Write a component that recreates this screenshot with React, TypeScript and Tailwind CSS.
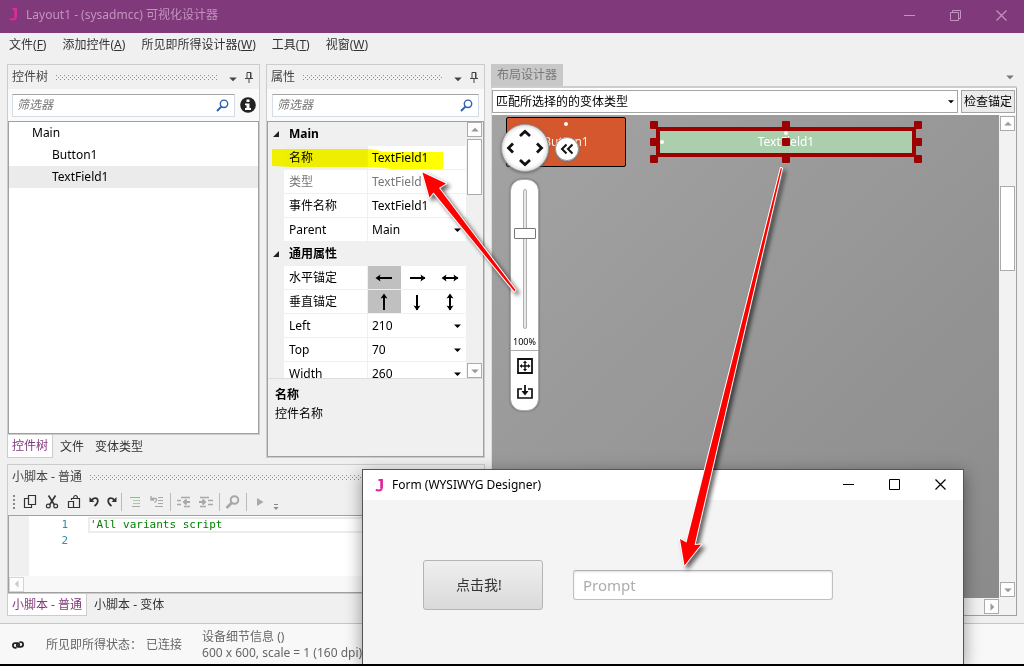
import type { ReactNode } from "react";

type Dir = "up" | "down" | "left" | "right";

const triangles: Record<Dir, string> = {
  up: "0,6 5,1 10,6",
  down: "0,2 10,2 5,7",
  left: "6,0 1,5 6,10",
  right: "2,0 7,5 2,10",
};

function Triangle({ dir, className }: { dir: Dir; className: string }) {
  return (
    <svg viewBox={dir === "up" || dir === "down" ? "0 0 10 8" : "0 0 8 10"} className={className} aria-hidden="true">
      <polygon points={triangles[dir]} fill="currentColor" />
    </svg>
  );
}

function Grip({ id }: { id: string }) {
  return (
    <svg className="h-[5px] min-w-0 flex-1" aria-hidden="true">
      <defs>
        <pattern id={id} width="4" height="4" patternUnits="userSpaceOnUse">
          <rect width="1" height="1" fill="#8c8c8c" />
          <rect x="2" y="2" width="1" height="1" fill="#8c8c8c" />
        </pattern>
      </defs>
      <rect width="100%" height="5" fill={`url(#${id})`} />
    </svg>
  );
}

function JLogo() {
  return (
    <svg viewBox="0 0 10 13" className="h-[13px] w-[10px]" aria-hidden="true">
      <path d="M4.500 1h3.300v7.400c0 2-1 3-3 3-1.200 0-2.200-.2-3-.7" fill="none" stroke="#dc2c9c" strokeWidth="2" />
      <path d="M6.300 0h2.500v9H6.300z" fill="#dc2c9c" />
    </svg>
  );
}

function PanelHeader({ title, id }: { title: string; id: string }) {
  return (
    <div className="flex h-6 shrink-0 items-center pl-1 pr-[2px] text-[#444]">
      <h2 className="mr-2">{title}</h2>
      <Grip id={id} />
      <button aria-label="菜单" className="ml-2 flex h-4 w-4 items-center justify-center pt-1">
        <Triangle dir="down" className="h-[6px] w-2" />
      </button>
      <button aria-label="固定" className="flex h-4 w-4 items-center justify-center">
        <svg viewBox="0 0 8 11" className="h-[11px] w-2" fill="none" stroke="currentColor" aria-hidden="true">
          <path d="M2 6V.5h4V6M5.500.5V6M0 6.500h8M4 6.500V11" />
        </svg>
      </button>
    </div>
  );
}

function Filter({ label }: { label: string }) {
  return (
    <div className="flex h-[23px] min-w-0 flex-1 items-center border border-[#d5dce6] border-t-[#a5a5a5] bg-white pr-[5px]">
      <input
        aria-label={label}
        placeholder="筛选器"
        className="min-w-0 flex-1 bg-transparent pl-1 italic outline-none placeholder:text-[#777]"
      />
      <svg viewBox="0 0 13 13" className="h-[13px] w-[13px]" fill="none" stroke="#2f5fae" aria-hidden="true">
        <circle cx="8" cy="4.800" r="3.700" strokeWidth="1.400" />
        <path d="M5.400 7.600 1 12" strokeWidth="2" />
      </svg>
    </div>
  );
}

function Anchor({ kind, active }: { kind: string; active?: boolean }) {
  const vertical = kind.startsWith("v");
  const start = kind !== "h-end" && kind !== "v-end";
  const end = kind !== "h-start" && kind !== "v-start";
  return (
    <button aria-label={kind} className={`flex h-[23px] w-[33px] items-center justify-center ${active ? "bg-[#c0c0c0]" : ""}`}>
      <svg viewBox="0 0 18 18" className={`h-[18px] w-[18px] ${vertical ? "rotate-90" : ""}`} aria-hidden="true">
        <path d="M2 9h15" stroke="#000" strokeWidth="2" />
        {start && <path d="M.5 9 5.500 5.500 4.500 9l1 3.500z" />}
        {end && <path d="m17.500 9-5-3.500 1 3.500-1 3.500z" />}
      </svg>
    </button>
  );
}

function GroupRow({ title }: { title: string }) {
  return (
    <tr className="h-6">
      <th colSpan={3} className="p-0 text-left font-bold text-black">
        <span className="flex items-center">
          <svg viewBox="0 0 8 8" className="ml-1 mr-[9px] h-2 w-2" aria-hidden="true">
            <path d="M7 1v6H1z" fill="#222" />
          </svg>
          {title}
        </span>
      </th>
    </tr>
  );
}

function PropRow({ name, muted, selected, children }: { name: string; muted?: boolean; selected?: boolean; children: ReactNode }) {
  return (
    <tr className={`h-6 ${muted ? "text-[#777]" : "text-black"}`}>
      <td className="p-0" />
      <th
        scope="row"
        className={`border-b border-r border-[#f0f0f0] p-0 pl-[5px] text-left font-normal ${selected ? "bg-[#eee]" : "bg-white"}`}
      >
        {name}
      </th>
      <td className="border-b border-[#f0f0f0] bg-white p-0">{children}</td>
    </tr>
  );
}

function TextValue({ label, value }: { label: string; value: string }) {
  return <input aria-label={label} defaultValue={value} className="block w-full bg-transparent pl-1 outline-none" />;
}

function SelectValue({ label, value }: { label: string; value: string }) {
  return (
    <div className="flex items-center pr-[5px]">
      <select aria-label={label} className="min-w-0 flex-1 appearance-none bg-transparent pl-1 outline-none">
        <option>{value}</option>
      </select>
      <Triangle dir="down" className="h-[6px] w-[7px]" />
    </div>
  );
}

function ScrollButton({ dir }: { dir: Dir }) {
  const size = dir === "up" || dir === "down" ? "h-[6px] w-2" : "h-2 w-[6px]";
  return (
    <button aria-label={dir} className="flex h-[15px] w-[15px] shrink-0 items-center justify-center border border-[#ababab] bg-[#fdfdfd] text-[#999]">
      <Triangle dir={dir} className={size} />
    </button>
  );
}

function Tab({ active, children }: { active?: boolean; children: ReactNode }) {
  return (
    <button className={`px-1 ${active ? "border border-t-0 border-[#ccc] bg-white text-[#80397b]" : "text-[#333]"}`}>
      {children}
    </button>
  );
}

function TreePanel() {
  return (
    <div className="flex w-[253px] shrink-0 flex-col">
      <section className="flex min-h-0 flex-1 flex-col border border-[#ccc]">
        <PanelHeader title="控件树" id="grip-tree" />
        <div className="flex h-8 shrink-0 items-center gap-[5px] bg-[#fafafa] pl-1 pr-[3px]">
          <Filter label="筛选控件" />
          <button aria-label="信息">
            <svg viewBox="0 0 16 16" className="h-4 w-4" aria-hidden="true">
              <circle cx="8" cy="8" r="7.800" fill="#222" />
              <path d="M6.500 2.500h3v2.500h-3zM5 6.400h4.500V11H11v2H5v-2h1.500V8.300H5z" fill="#fff" />
            </svg>
          </button>
        </div>
        <ul className="min-h-0 flex-1 border border-[#a0a0a0] bg-white text-black">
          <li className="flex h-[22px] items-center pl-[23px]">Main</li>
          <li className="flex h-[22px] items-center pl-[43px]">Button1</li>
          <li className="flex h-[22px] items-center bg-[#ebebeb] pl-[43px]">TextField1</li>
        </ul>
      </section>
      <div className="flex h-[23px] shrink-0 gap-[3px]">
        <Tab active>控件树</Tab>
        <Tab>文件</Tab>
        <Tab>变体类型</Tab>
      </div>
    </div>
  );
}

function PropertiesPanel() {
  return (
    <section className="flex min-w-0 flex-1 flex-col border border-[#ccc]">
      <PanelHeader title="属性" id="grip-props" />
      <div className="flex h-8 shrink-0 items-center bg-[#fafafa] pl-[5px] pr-[5px]">
        <Filter label="筛选属性" />
      </div>
      <div className="flex min-h-0 flex-1 flex-col border border-[#a0a0a0]">
        <div className="flex min-h-0 flex-1 justify-between overflow-hidden">
          <div className="min-w-0 flex-1 overflow-hidden">
            <table className="w-full table-fixed border-separate border-spacing-0">
              <colgroup>
                <col className="w-4" />
                <col className="w-[84px]" />
                <col />
              </colgroup>
              <tbody>
                <GroupRow title="Main" />
                <PropRow name="名称" selected><TextValue label="名称" value="TextField1" /></PropRow>
                <PropRow name="类型" muted><TextValue label="类型" value="TextField" /></PropRow>
                <PropRow name="事件名称"><TextValue label="事件名称" value="TextField1" /></PropRow>
                <PropRow name="Parent"><SelectValue label="Parent" value="Main" /></PropRow>
                <GroupRow title="通用属性" />
                <PropRow name="水平锚定">
                  <div className="flex">
                    <Anchor kind="h-start" active />
                    <Anchor kind="h-end" />
                    <Anchor kind="h-both" />
                  </div>
                </PropRow>
                <PropRow name="垂直锚定">
                  <div className="flex">
                    <Anchor kind="v-start" active />
                    <Anchor kind="v-end" />
                    <Anchor kind="v-both" />
                  </div>
                </PropRow>
                <PropRow name="Left"><SelectValue label="Left" value="210" /></PropRow>
                <PropRow name="Top"><SelectValue label="Top" value="70" /></PropRow>
                <PropRow name="Width"><SelectValue label="Width" value="260" /></PropRow>
              </tbody>
            </table>
          </div>
          <div className="ml-px flex w-4 shrink-0 flex-col">
            <ScrollButton dir="up" />
            <div className="mt-[2px] h-14 w-[15px] border border-[#ababab] bg-white" />
            <div className="flex-1" />
            <ScrollButton dir="down" />
          </div>
        </div>
        <div className="h-[78px] shrink-0 border-t border-[#ddd] px-[7px] pt-[6px] leading-[19px] text-black">
          <h3 className="font-bold">名称</h3>
          <p>控件名称</p>
        </div>
      </div>
    </section>
  );
}

function ToolButton({ label, muted, children }: { label: string; muted?: boolean; children: ReactNode }) {
  return (
    <button aria-label={label} className={`flex h-5 w-[22px] items-center justify-center ${muted ? "text-[#a8a8a8]" : "text-[#333]"}`}>
      <svg viewBox="0 0 16 16" className="h-4 w-4" fill="none" stroke="currentColor" aria-hidden="true">
        {children}
      </svg>
    </button>
  );
}

function Separator() {
  return <div className="h-[18px] w-px shrink-0 bg-[#bbb]" />;
}

function ScriptPanel() {
  return (
    <div className="flex h-[152px] shrink-0 flex-col">
      <section className="flex min-h-0 flex-1 flex-col border border-[#ccc]">
        <PanelHeader title="小脚本 - 普通" id="grip-script" />
        <div className="flex h-[26px] shrink-0 items-center pl-[5px]">
          <svg viewBox="0 0 2 14" className="mr-1 h-[14px] w-[2px]" aria-hidden="true">
            <path d="M1 0v14" stroke="#888" strokeWidth="2" strokeDasharray="2 2" />
          </svg>
          <ToolButton label="复制">
            <path d="M6.500 1.500h7v9h-7zM6.500 4.500h-4v9h7v-3" strokeWidth="1.200" />
          </ToolButton>
          <ToolButton label="剪切">
            <path d="M4.500 1.500 10.500 11M11.500 1.500 5.500 11" strokeWidth="1.600" />
            <circle cx="4.300" cy="12" r="1.900" strokeWidth="1.200" />
            <circle cx="11.700" cy="12" r="1.900" strokeWidth="1.200" />
          </ToolButton>
          <ToolButton label="粘贴">
            <path d="M5.500 6V4.500h8v9h-6M7.500 4.500c0-4 4-4 4 0" strokeWidth="1.200" />
            <path d="M2.500 7.500h5v6h-5z" strokeWidth="1.200" />
          </ToolButton>
          <div className="flex [&>button]:w-[18px]">
            <ToolButton label="撤销">
              <path d="M5 6.500 7.500 4.500c5-2 6 4 1 7.500" strokeWidth="1.800" />
              <path d="M3.500 3v5h5z" fill="currentColor" stroke="none" />
            </ToolButton>
            <ToolButton label="重做">
              <path d="M11 6.500 8.500 4.500c-5-2-6 4-1 7.500" strokeWidth="1.800" />
              <path d="M12.500 3v5h-5z" fill="currentColor" stroke="none" />
            </ToolButton>
          </div>
          <Separator />
          <div className="flex px-[2px]">
            <ToolButton label="注释" muted>
              <path d="M3 3.500h10M7 6.500h6M7 9.500h6M5 12.500h8" />
              <path d="M6 6.500h6M6 9.500h6" stroke="#a5cfa5" />
            </ToolButton>
            <ToolButton label="取消注释" muted>
              <path d="M9 3.500h5M9 6.500h5M9 9.500h5M6 12.500h8" />
              <path d="M2.500 4.500h4c2 0 1 3-1 4M2 2v4h3" strokeWidth="1.300" />
            </ToolButton>
          </div>
          <Separator />
          <div className="flex px-[2px]">
            <ToolButton label="减少缩进" muted>
              <path d="M5 3.500h9M8 12.500h6M1 6.500h4M1 10.500h4" strokeWidth="1.500" />
              <path d="M14 8H8M10.500 5.500 8 8l2.500 2.500" strokeWidth="2" />
            </ToolButton>
            <ToolButton label="增加缩进" muted>
              <path d="M2 3.500h9M2 12.500h6M10 6.500h5M10 10.500h5" strokeWidth="1.500" />
              <path d="M1 8h6M4.500 5.500 7 8l-2.500 2.500" strokeWidth="2" />
            </ToolButton>
          </div>
          <Separator />
          <div className="flex px-[2px]">
            <ToolButton label="查找" muted>
              <circle cx="9.500" cy="6" r="3.800" strokeWidth="2" />
              <path d="M7 8.500 1.500 14" strokeWidth="2.800" />
            </ToolButton>
          </div>
          <Separator />
          <div className="flex px-[2px]">
            <ToolButton label="运行" muted>
              <path d="M5 4v8l6.500-4z" fill="currentColor" stroke="none" />
            </ToolButton>
          </div>
          <svg viewBox="0 0 6 7" className="mt-[10px] h-[7px] w-[6px] text-[#888]" aria-hidden="true">
            <path d="M1 .5h4" stroke="currentColor" />
            <path d="M.5 3h5L3 6z" fill="currentColor" />
          </svg>
        </div>
        <div className="flex min-h-0 flex-1 flex-col border border-[#a0a0a0] bg-white">
          <div className="flex flex-1 font-['DejaVu_Sans_Mono',monospace] text-[11px] leading-4">
            <div className="w-5 bg-[#f0f0f0]" />
            <ol className="w-[39px] pt-px text-right text-[#2b91af]">
              <li>1</li>
              <li>2</li>
            </ol>
            <div className="ml-5 flex-1 pt-px">
              <pre className="h-4 border-2 border-r-0 border-[#ececec] font-[inherit] leading-3 text-[#008000]">'All variants script</pre>
            </div>
          </div>
          <div className="flex h-4 shrink-0 items-center bg-[#f2f2f2] opacity-50">
            <ScrollButton dir="left" />
          </div>
        </div>
      </section>
      <div className="flex h-[22px] shrink-0 gap-[3px]">
        <Tab active>小脚本 - 普通</Tab>
        <Tab>小脚本 - 变体</Tab>
      </div>
    </div>
  );
}

const handleRows = [
  ["-left-[6px] -top-[6px]", "left-[126px] -top-[6px]", "-right-[6px] -top-[6px]"],
  ["-left-[6px] top-[11px]", "left-[126px] top-[11px]", "-right-[6px] top-[11px]"],
  ["-left-[6px] -bottom-[6px]", "left-[126px] -bottom-[6px]", "-right-[6px] -bottom-[6px]"],
];

function Canvas() {
  return (
    <div className="relative min-w-0 flex-1 overflow-hidden bg-linear-to-br from-[#a3a3a3] to-[#8b8b8b]">
      <div className="absolute left-[14px] top-[2px] flex h-[50px] w-[120px] items-center justify-center rounded-[2px] border border-black bg-[#d5572e] text-[#fff0e8]">
        Button1
        <i className="absolute left-[57px] top-1 h-1 w-1 rounded-full bg-white" />
      </div>
      <div className="absolute left-[164px] top-3 h-[30px] w-[260px]">
        <div className="flex h-full items-center justify-center border-4 border-[#9d0000] bg-[#abcfac] text-white">TextField1</div>
        <i className="absolute left-1 top-[13px] h-1 w-1 rounded-full bg-white" />
        <i className="absolute left-32 top-1 h-1 w-1 rounded-full bg-white" />
        {handleRows.flat().map((place) => (
          <i key={place} className={`absolute h-2 w-2 rounded-[1px] bg-[#9d0000] ${place}`} />
        ))}
      </div>
      <button aria-label="平移" className="absolute left-[9px] top-[9px] h-12 w-12 rounded-full border border-[#999] bg-white shadow-[inset_0_0_4px_#bbb,0_1px_3px_#666]">
        <svg viewBox="0 0 46 46" className="h-full w-full" fill="none" stroke="#111" strokeWidth="2.800" aria-hidden="true">
          <path d="m18 11 5-4.500 5 4.500M18 35l5 4.500 5-4.500M11 18.500 6.500 23l4.500 4.500M35 18.500l4.500 4.500-4.500 4.500" />
        </svg>
      </button>
      <button aria-label="收起" className="absolute left-[63px] top-[22px] h-6 w-6 rounded-full border border-[#999] bg-white shadow-[0_1px_2px_#777]">
        <svg viewBox="0 0 22 22" className="h-full w-full" fill="none" stroke="#111" strokeWidth="2" aria-hidden="true">
          <path d="M10.500 6.500 6 11l4.500 4.500M16.500 6.500 12 11l4.500 4.500" />
        </svg>
      </button>
      <div className="absolute left-[18px] top-16 flex h-[232px] w-[29px] flex-col items-center rounded-[12px] border border-[#aaa] bg-white pt-[9px] text-black shadow-[0_0_2px_#555]">
        <input
          type="range"
          aria-label="缩放"
          defaultValue={70}
          className="h-[140px] w-[22px] appearance-none bg-transparent [direction:rtl] [writing-mode:vertical-lr] [&::-webkit-slider-runnable-track]:h-full [&::-webkit-slider-runnable-track]:w-1 [&::-webkit-slider-runnable-track]:rounded-[2px] [&::-webkit-slider-runnable-track]:border [&::-webkit-slider-runnable-track]:border-[#b0b0b0] [&::-webkit-slider-runnable-track]:bg-[#e7e7e7] [&::-webkit-slider-thumb]:-ml-[10px] [&::-webkit-slider-thumb]:h-[11px] [&::-webkit-slider-thumb]:w-[22px] [&::-webkit-slider-thumb]:appearance-none [&::-webkit-slider-thumb]:rounded-[1px] [&::-webkit-slider-thumb]:border [&::-webkit-slider-thumb]:border-[#777] [&::-webkit-slider-thumb]:bg-white"
        />
        <span className="flex h-[22px] items-center justify-center self-stretch border-b border-[#aaa] pt-1 text-[9px]">100%</span>
        <button aria-label="适应窗口" className="mt-[7px]">
          <svg viewBox="0 0 16 16" className="h-4 w-4" fill="none" stroke="#111" aria-hidden="true">
            <path d="M1 1h14v14H1z" strokeWidth="1.800" />
            <path d="M8 4v8M4 8h8" strokeWidth="1.400" />
            <path d="m8 2.500 2 2.500H6zM8 13.500 6 11h4zM2.500 8 5 6v4zM13.500 8 11 10V6z" fill="#111" stroke="none" />
          </svg>
        </button>
        <button aria-label="保存位置" className="mt-[11px]">
          <svg viewBox="0 0 16 14" className="h-[14px] w-4" fill="none" stroke="#111" aria-hidden="true">
            <path d="M5 4H1v9h14V4h-4" strokeWidth="1.700" />
            <path d="M8 0v8" strokeWidth="1.800" />
            <path d="M4.500 6h7L8 10.500z" fill="#111" stroke="none" />
          </svg>
        </button>
      </div>
    </div>
  );
}

function Designer() {
  return (
    <section className="flex min-w-0 flex-1 flex-col">
      <div className="flex h-[24px] shrink-0 items-stretch justify-between border-b-2 border-[#cdcdcd] pr-[3px]">
        <h2 className="flex items-center bg-[#c8c8c8] px-[6px] text-[#777]">布局设计器</h2>
        <button aria-label="窗口列表" className="flex items-end pb-[6px] text-[#777]">
          <Triangle dir="down" className="h-[6px] w-2" />
        </button>
      </div>
      <div className="flex min-h-0 flex-1 flex-col border border-t-0 border-[#a0a0a0] border-l-[#ddd]">
        <div className="flex h-[27px] shrink-0 items-center gap-[3px] bg-white pr-px">
          <div className="flex h-[23px] min-w-0 flex-1 items-center border border-[#a5a5a5] pr-[3px] text-black">
            <select aria-label="变体类型" className="min-w-0 flex-1 appearance-none bg-transparent pl-[3px] outline-none">
              <option>匹配所选择的的变体类型</option>
            </select>
            <Triangle dir="down" className="h-[5px] w-[6px]" />
          </div>
          <button className="h-[23px] border border-[#a5a5a5] bg-[#ebebeb] px-[2px] text-black">检查锚定</button>
        </div>
        <div className="flex min-h-0 flex-1">
          <Canvas />
          <div className="flex w-[17px] shrink-0 flex-col items-center bg-[#f2f2f2] py-px">
            <ScrollButton dir="up" />
            <div className="mt-[55px] h-[85px] w-[15px] border border-[#ababab] bg-white" />
            <div className="flex-1" />
            <ScrollButton dir="down" />
          </div>
        </div>
        <div className="flex h-[17px] shrink-0 items-center justify-end bg-[#f2f2f2] pr-[17px]">
          <ScrollButton dir="right" />
        </div>
      </div>
    </section>
  );
}

function WindowButtons({ restore, className }: { restore?: boolean; className: string }) {
  return (
    <div className={`flex ${className}`}>
      <button aria-label="最小化" className="flex w-[46px] items-center justify-center">
        <svg viewBox="0 0 11 11" className="h-[11px] w-[11px]" stroke="currentColor" aria-hidden="true">
          <path d="M0 5.500h11" />
        </svg>
      </button>
      <button aria-label="最大化" className="flex w-[46px] items-center justify-center">
        <svg viewBox="0 0 11 11" className="h-[11px] w-[11px]" fill="none" stroke="currentColor" aria-hidden="true">
          <path d={restore ? "M.5 2.500h8v8h-8zM2.500 2.500v-2h8v8h-2" : "M.5.5h10v10H.5z"} />
        </svg>
      </button>
      <button aria-label="关闭" className="flex w-[46px] items-center justify-center">
        <svg viewBox="0 0 11 11" className="h-[11px] w-[11px]" stroke="currentColor" strokeWidth="1.200" aria-hidden="true">
          <path d="m.5.5 10 10M10.500.5l-10 10" />
        </svg>
      </button>
    </div>
  );
}

function FormWindow() {
  return (
    <div
      role="dialog"
      aria-label="Form"
      className="absolute bottom-[2px] left-[362px] top-[469px] flex w-[602px] flex-col border border-b-0 border-[#555] bg-[#f4f4f4] shadow-[0_4px_16px_rgba(0,0,0,0.4)]"
    >
      <div className="flex h-[30px] shrink-0 justify-between bg-white text-black">
        <div className="flex items-center gap-2 pl-[11px]">
          <JLogo />
          <span>Form (WYSIWYG Designer)</span>
        </div>
        <WindowButtons className="pb-[2px]" />
      </div>
      <div className="flex items-center gap-[30px] pl-[60px] pt-[60px]">
        <button className="h-[50px] w-[120px] rounded-[3px] border border-[#b5b5b5] bg-linear-to-b from-[#efefef] to-[#dadada] pr-2 text-sm text-[#333]">
          点击我!
        </button>
        <input
          aria-label="Prompt"
          placeholder="Prompt"
          className="h-[30px] w-[260px] rounded-[3px] border border-[#c0c0c0] border-t-[#b0b0b0] bg-white px-[9px] text-[15px] shadow-[inset_0_1px_2px_#ddd] outline-none placeholder:text-[#adadad]"
        />
      </div>
    </div>
  );
}

function Annotations() {
  return (
    <>
      <svg viewBox="0 0 172 22" className="pointer-events-none absolute left-[272px] top-[149px] h-[22px] w-[172px] mix-blend-multiply" aria-hidden="true">
        <path d="M0 0H98Q106 1 112 3H171V20H120Q110 19 102 18H20L0 17z" fill="#ffff00" />
      </svg>
      <svg
        viewBox="410 160 400 420"
        className="pointer-events-none absolute left-[410px] top-[160px] h-[420px] w-[400px] drop-shadow-[3px_3px_2px_rgba(0,0,0,0.6)]"
        fill="#ff0000"
        stroke="#fff"
        strokeWidth="2"
        strokeLinejoin="round"
        paintOrder="stroke"
        aria-hidden="true"
      >
        <path d="M422.500 172.500 446 183.500 439 188 515.500 290 514.500 291.500 433.500 192.500 429.500 197.500z" />
        <path d="M684.500 565.500 680 539 686.500 542.500 780.800 168 782 168.500 694.500 545 701 544.500z" />
      </svg>
    </>
  );
}

const menus = [
  ["文件", "F"],
  ["添加控件", "A"],
  ["所见即所得设计器", "W"],
  ["工具", "T"],
  ["视窗", "W"],
];

export default function App() {
  return (
    <div className="relative flex h-screen flex-col overflow-hidden bg-[#f0f0f0] font-['Noto_Sans','Noto_Sans_CJK_SC',sans-serif] text-[12px] leading-4 text-[#333]">
      <header className="flex h-[33px] shrink-0 justify-between bg-[#80397b] text-[#c294be]">
        <div className="flex items-center gap-2 pb-1 pl-2">
          <JLogo />
          <h1>Layout1 - (sysadmcc) 可视化设计器</h1>
        </div>
        <WindowButtons restore className="pb-[2px]" />
      </header>
      <nav className="flex h-[31px] shrink-0 items-center gap-4 pb-[7px] pl-[9px]">
        {menus.map(([label, key]) => (
          <button key={label}>
            {label}(<u>{key}</u>)
          </button>
        ))}
      </nav>
      <main className="flex min-h-0 flex-1 gap-[6px] pb-[7px] pl-[7px] pr-[7px]">
        <div className="flex w-[478px] shrink-0 flex-col gap-[6px]">
          <div className="flex min-h-0 flex-1 gap-[6px]">
            <TreePanel />
            <PropertiesPanel />
          </div>
          <ScriptPanel />
        </div>
        <Designer />
      </main>
      <footer className="flex h-[43px] shrink-0 items-center border-b-2 border-t border-b-black border-t-[#c5c5c5] bg-[#f8f8f8] pl-3 pt-px text-[#666]">
        <svg viewBox="0 0 12 8" className="mr-[22px] h-2 w-3" fill="none" stroke="#222" strokeWidth="1.800" aria-hidden="true">
          <path d="M4.500 6.800H3.200a2.300 2.300 0 0 1 0-4.600h2.600c2 0 2 2.600.2 3M7.500 1.200h1.300a2.300 2.300 0 0 1 0 4.600H6.200c-2 0-2-2.600-.2-3" />
        </svg>
        <span className="mr-1">所见即所得状态：</span>
        <span className="mr-5">已连接</span>
        <div>
          <p>设备细节信息 ()</p>
          <p>600 x 600, scale = 1 (160 dpi)</p>
        </div>
      </footer>
      <FormWindow />
      <Annotations />
    </div>
  );
}
